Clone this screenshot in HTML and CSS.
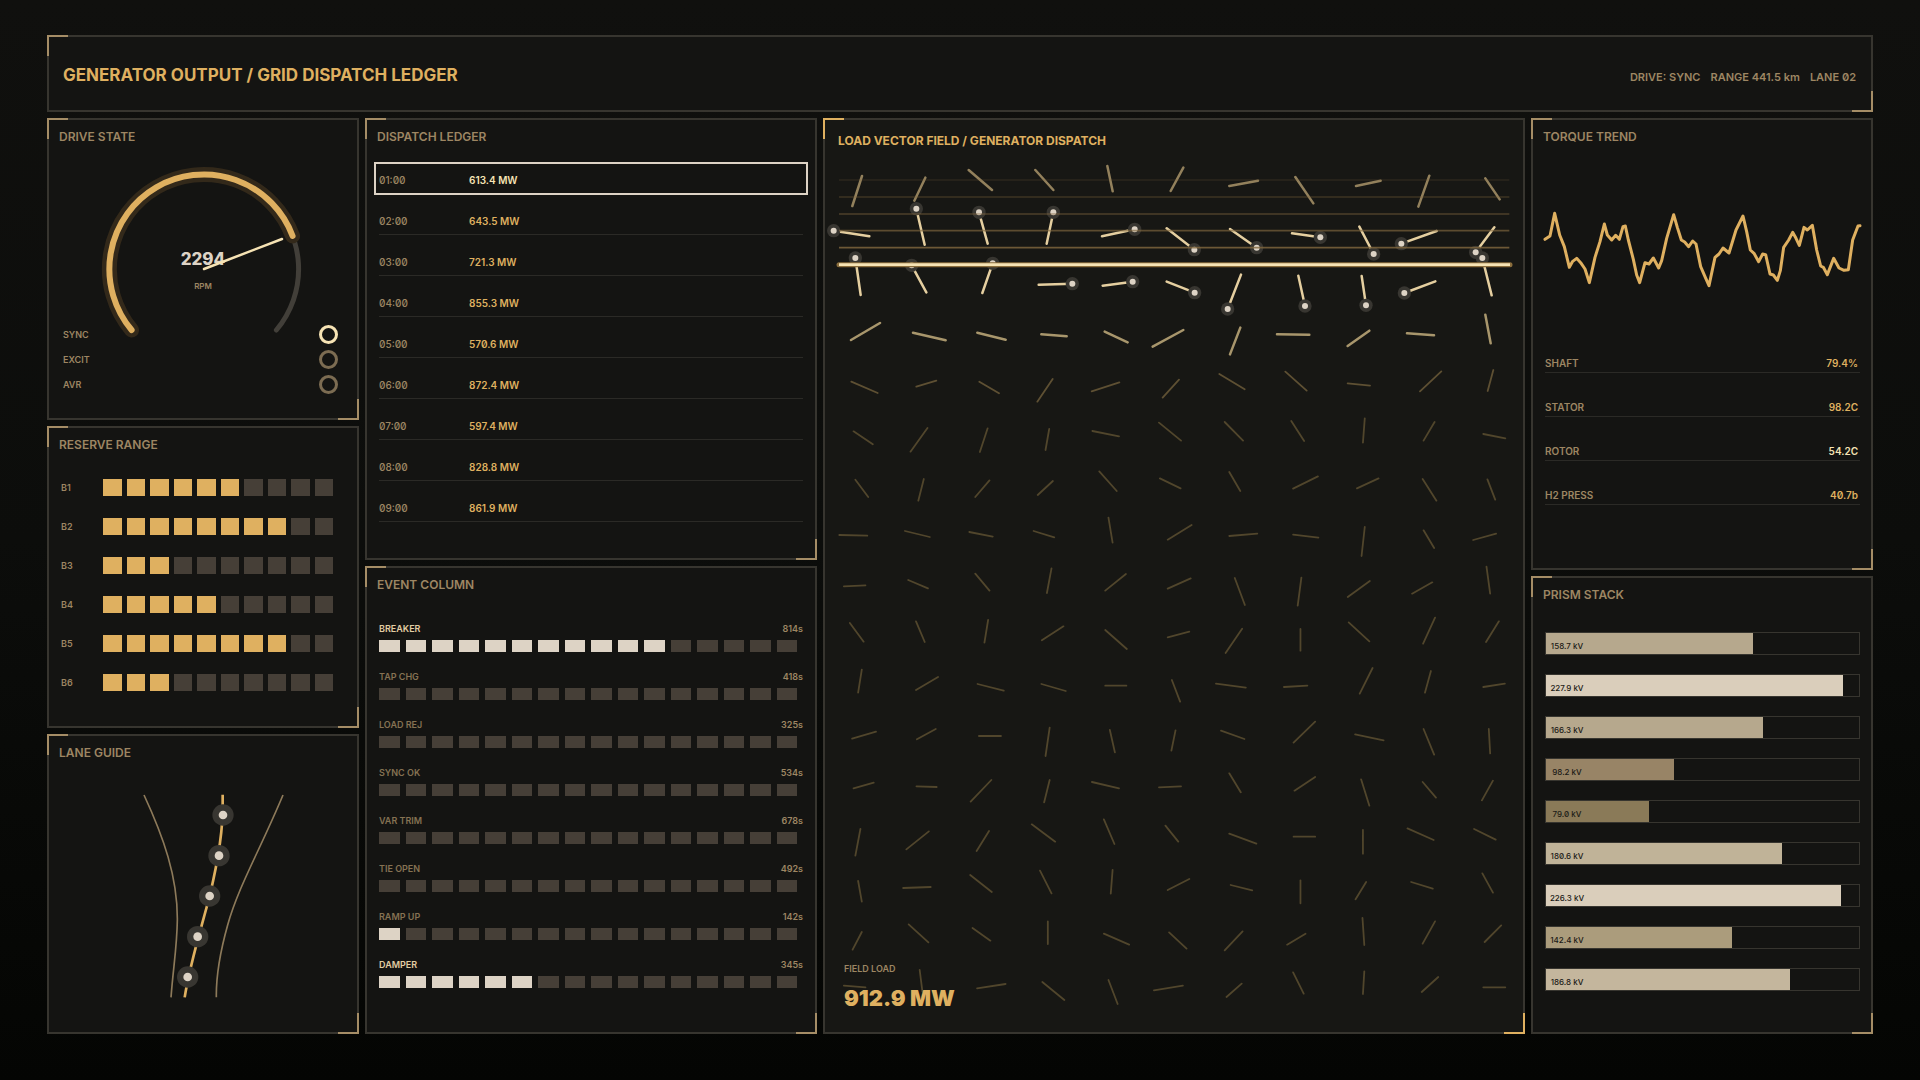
FILE: index.html
```html
<!DOCTYPE html>
<html lang="en">
<head>
    <meta charset="UTF-8">
    <meta name="viewport" content="width=device-width, initial-scale=1.0">
    <title>Generator Output / Grid Dispatch Ledger</title>
    <link rel="stylesheet" href="styles.css">
</head>
<body>
    <div class="screen">
        <header class="panel topbar">
            <h1>GENERATOR OUTPUT / GRID DISPATCH LEDGER</h1>
            <div class="topbar-info">
                <span>DRIVE: SYNC</span>
                <span>RANGE 441.5 km</span>
                <span>LANE 02</span>
            </div>
        </header>

        <main class="board">
            <div class="column column-left">
                <section class="panel">
                    <h2>DRIVE STATE</h2>
                    <svg class="gauge" viewBox="-155 -112 308 165">
                        <path class="gauge-track" d="M-72.4 61A94.6 94.6 0 1 1 72.4 61"/>
                        <path class="gauge-halo" d="M-72.4 61A94.6 94.6 0 1 1 88.6 -33"/>
                        <path class="gauge-value" d="M-72.4 61A94.6 94.6 0 1 1 88.6 -33"/>
                        <text class="gauge-number" x="-1" y="-4">2294</text>
                        <text class="gauge-unit" x="-1" y="20">RPM</text>
                        <path class="gauge-needle" d="M0 0L78 -30"/>
                    </svg>
                    <ul class="status-list">
                        <li>SYNC <span class="lamp lamp-on"></span></li>
                        <li>EXCIT <span class="lamp"></span></li>
                        <li>AVR <span class="lamp"></span></li>
                    </ul>
                </section>

                <section class="panel">
                    <h2>RESERVE RANGE</h2>
                    <ul class="reserve">
                        <li><span>B1</span><div class="cells" data-total="10" data-on="6"></div></li>
                        <li><span>B2</span><div class="cells" data-total="10" data-on="8"></div></li>
                        <li><span>B3</span><div class="cells" data-total="10" data-on="3"></div></li>
                        <li><span>B4</span><div class="cells" data-total="10" data-on="5"></div></li>
                        <li><span>B5</span><div class="cells" data-total="10" data-on="8"></div></li>
                        <li><span>B6</span><div class="cells" data-total="10" data-on="3"></div></li>
                    </ul>
                </section>

                <section class="panel">
                    <h2>LANE GUIDE</h2>
                    <svg class="lane" viewBox="57 159 924 777">
                        <path class="lane-edge" d="M342 225C400 350 443 470 442 600C441 680 430 740 423 832M759 225C690 390 625 500 593 615C572 690 558 760 559 832"/>
                        <path class="lane-center" d="M578 224V250C580 330 560 440 539 528C515 620 480 730 464 832"/>
                        <g class="lane-halo">
                            <circle cx="579" cy="285" r="32"/><circle cx="567" cy="407" r="32"/><circle cx="539" cy="528" r="32"/><circle cx="503" cy="650" r="32"/><circle cx="473" cy="771" r="32"/>
                        </g>
                        <g class="lane-dot">
                            <circle cx="579" cy="285" r="13"/><circle cx="567" cy="407" r="13"/><circle cx="539" cy="528" r="13"/><circle cx="503" cy="650" r="13"/><circle cx="473" cy="771" r="13"/>
                        </g>
                    </svg>
                </section>
            </div>

            <div class="column column-ledger">
                <section class="panel">
                    <h2>DISPATCH LEDGER</h2>
                    <table class="ledger">
                        <tr class="selected"><th scope="row">01:00</th><td>613.4 MW</td></tr>
                        <tr><th scope="row">02:00</th><td>643.5 MW</td></tr>
                        <tr><th scope="row">03:00</th><td>721.3 MW</td></tr>
                        <tr><th scope="row">04:00</th><td>855.3 MW</td></tr>
                        <tr><th scope="row">05:00</th><td>570.6 MW</td></tr>
                        <tr><th scope="row">06:00</th><td>872.4 MW</td></tr>
                        <tr><th scope="row">07:00</th><td>597.4 MW</td></tr>
                        <tr><th scope="row">08:00</th><td>828.8 MW</td></tr>
                        <tr><th scope="row">09:00</th><td>861.9 MW</td></tr>
                    </table>
                </section>

                <section class="panel">
                    <h2>EVENT COLUMN</h2>
                    <ul class="events">
                        <li class="active"><p><b>BREAKER</b><span>814s</span></p><div class="cells" data-total="16" data-on="11"></div></li>
                        <li><p><b>TAP CHG</b><span>418s</span></p><div class="cells" data-total="16" data-on="0"></div></li>
                        <li><p><b>LOAD REJ</b><span>325s</span></p><div class="cells" data-total="16" data-on="0"></div></li>
                        <li><p><b>SYNC OK</b><span>534s</span></p><div class="cells" data-total="16" data-on="0"></div></li>
                        <li><p><b>VAR TRIM</b><span>678s</span></p><div class="cells" data-total="16" data-on="0"></div></li>
                        <li><p><b>TIE OPEN</b><span>492s</span></p><div class="cells" data-total="16" data-on="0"></div></li>
                        <li><p><b>RAMP UP</b><span>142s</span></p><div class="cells" data-total="16" data-on="1"></div></li>
                        <li class="active"><p><b>DAMPER</b><span>345s</span></p><div class="cells" data-total="16" data-on="6"></div></li>
                    </ul>
                </section>
            </div>

            <section class="panel panel-field">
                <h2>LOAD VECTOR FIELD / GENERATOR DISPATCH</h2>
                <svg class="field" viewBox="15 120 2094 2646">
                    <!-- rows near the sweep line, left half -->
                    <path class="vec vec-top" d="M126 198L97 288M316 203L283 272M446 180L516 240M646 180L700 240M862 168L878 244"/>
                    <path class="vec vec-hot" d="M41 362L148 379M289 296L314 404M477 307L503 401M700 307L680 401M944 358L846 379M106 444L122 555M275 466L319 547M518 460L487 549M656 524L757 521M848 527L938 515"/>
                    <path class="vec vec-warm" d="M93 690L180 639M279 668L377 691M472 668L557 689M664 673L740 679M854 665L923 697"/>
                    <path class="vec vec-dim" d="M94 815L173 849M289 830L349 812M478 815L537 850M698 807L652 875M815 844L898 817"/>
                    <!-- right half -->
                    <g transform="translate(1050 0)">
                        <path class="vec vec-top" d="M2 243L40 173M178 228L264 212M376 201L430 280M558 228L632 212M778 197L745 290M946 205L989 268"/>
                        <path class="vec vec-hot" d="M-10 355L73 419M180 357L260 413M366 370L451 382M568 350L611 432M694 401L800 363M917 427L973 352M-10 515L74 548M213 494L173 597M385 497L405 588M575 498L588 586M796 514L703 549M937 444L965 556"/>
                        <path class="vec vec-warm" d="M-52 710L40 660M211 653L180 733M321 673L418 674M533 708L598 662M711 670L792 676M946 614L962 700"/>
                        <path class="vec vec-dim" d="M-22 863L27 809M148 792L224 838M346 785L410 842M533 820L600 827M814 784L750 844M970 780L953 843"/>
                    </g>
                    <!-- quiet rows -->
                    <g transform="translate(0 870) scale(1.378 1)">
                        <path class="vec vec-quiet" d="M73 94L115 133M234 84L197 155M365 85L348 156M499 87L491 150M593 93L651 109M738 68L786 122M881 66L921 122M1026 63L1054 123M1186 55L1182 128M1338 66L1314 122M1444 102L1492 115"/>
                        <path class="vec vec-quiet" d="M77 239L105 291M226 237L214 302M369 241L338 291M507 243L474 285M608 214L646 273M740 235L785 265M891 216L915 273M1084 229L1030 266M1216 235L1169 265M1312 237L1342 302M1453 238L1470 299"/>
                        <path class="vec vec-quiet" d="M42 405L103 407M185 393L239 411M325 396L376 410M465 393L510 412M628 353L637 428M809 375L757 419M891 408L952 401M1030 404L1085 413M1186 381L1179 468M1314 391L1337 444M1422 420L1472 401"/>
                        <path class="vec vec-quiet" d="M52 559L99 556M192 540L235 565M338 521L369 572M504 505L494 579M666 522L621 572M807 535L757 566M903 534L925 615M1048 533L1040 617M1197 543L1149 591M1333 547L1289 581M1451 500L1459 581"/>
                        <path class="vec vec-quiet" d="M65 669L95 725M209 664L228 726M366 660L358 728M530 679L483 721M621 690L668 747M804 695L757 712M919 686L883 759M1046 687V752M1151 667L1196 724M1339 653L1313 731M1478 664L1450 726"/>
                        <path class="vec vec-quiet" d="M91 809L83 878M257 831L209 870M343 852L400 872M482 852L535 873M621 857L667 857M766 840L784 905M862 851L927 863M1010 861L1061 857M1203 804L1175 881M1330 813L1317 878M1444 861L1491 851"/>
                    </g>
                    <g transform="translate(0 1800) scale(1.378 1)">
                        <path class="vec vec-quiet" d="M70 86L122 65M211 88L252 57M346 78H394M500 53L491 138M631 60L642 127M774 61L765 122M873 62L924 87M1078 35L1031 98M1165 73L1227 91M1314 57L1337 134M1456 57L1459 130"/>
                        <path class="vec vec-quiet" d="M73 235L117 218M210 229L254 231M373 210L328 275M500 210L488 277M592 216L651 235M738 232L786 229M891 190L916 247M1078 201L1033 242M1178 208L1196 287M1312 216L1341 263M1465 212L1441 271"/>
                        <path class="vec vec-quiet" d="M88 357L77 437M237 364L188 418M368 363L341 423M461 343L512 395M618 328L641 402M752 347L780 395M891 371L950 401M1031 380H1078M1182 360V431M1279 355L1336 390M1424 357L1471 389"/>
                        <path class="vec vec-quiet" d="M83 513L91 575M181 534L241 531M327 495L374 546M479 482L504 550M637 480L633 551M804 507L757 540M894 525L941 541M1046 511V580M1189 516L1166 568M1287 516L1334 536M1442 490L1465 548"/>
                        <path class="vec vec-quiet" d="M91 666L71 719M193 643L236 697M332 654L371 692M496 634V702M618 671L673 704M760 667L798 716M920 664L881 721M1057 671L1017 704M1181 624L1185 705M1339 634L1312 701M1483 646L1447 696"/>
                        <path class="vec vec-quiet" d="M52 827L99 832M217 780L223 845M342 835L404 822M484 816L532 870M628 810L648 882M727 841L790 827M918 821L885 861M1030 787L1053 851M1185 784L1182 852M1346 801L1310 846M1444 832H1492"/>
                    </g>
                    <g class="node-halo">
                        <circle cx="41" cy="362" r="20"/><circle cx="289" cy="296" r="20"/><circle cx="477" cy="307" r="20"/><circle cx="700" cy="307" r="20"/><circle cx="944" cy="358" r="20"/>
                        <circle cx="1123" cy="419" r="20"/><circle cx="1310" cy="413" r="20"/><circle cx="1501" cy="382" r="20"/><circle cx="1661" cy="432" r="20"/><circle cx="1744" cy="401" r="20"/><circle cx="1967" cy="427" r="20"/>
                        <circle cx="106" cy="444" r="20"/><circle cx="275" cy="466" r="20"/><circle cx="518" cy="460" r="20"/><circle cx="757" cy="521" r="20"/><circle cx="938" cy="515" r="20"/>
                        <circle cx="1124" cy="548" r="20"/><circle cx="1223" cy="597" r="20"/><circle cx="1455" cy="588" r="20"/><circle cx="1638" cy="586" r="20"/><circle cx="1753" cy="549" r="20"/><circle cx="1987" cy="444" r="20"/>
                    </g>
                    <g class="node-dot">
                        <circle cx="41" cy="362" r="9"/><circle cx="289" cy="296" r="9"/><circle cx="477" cy="307" r="9"/><circle cx="700" cy="307" r="9"/><circle cx="944" cy="358" r="9"/>
                        <circle cx="1123" cy="419" r="9"/><circle cx="1310" cy="413" r="9"/><circle cx="1501" cy="382" r="9"/><circle cx="1661" cy="432" r="9"/><circle cx="1744" cy="401" r="9"/><circle cx="1967" cy="427" r="9"/>
                        <circle cx="106" cy="444" r="9"/><circle cx="275" cy="466" r="9"/><circle cx="518" cy="460" r="9"/><circle cx="757" cy="521" r="9"/><circle cx="938" cy="515" r="9"/>
                        <circle cx="1124" cy="548" r="9"/><circle cx="1223" cy="597" r="9"/><circle cx="1455" cy="588" r="9"/><circle cx="1638" cy="586" r="9"/><circle cx="1753" cy="549" r="9"/><circle cx="1987" cy="444" r="9"/>
                    </g>
                    <!-- sweep line and its trail -->
                    <g class="trail">
                        <path opacity=".2" d="M57 210H2068"/>
                        <path opacity=".35" d="M57 261H2068"/>
                        <path opacity=".5" d="M57 312H2068"/>
                        <path opacity=".65" d="M57 362H2068"/>
                        <path opacity=".8" d="M57 413H2068"/>
                    </g>
                    <path class="sweep-glow" d="M57 464H2070"/>
                    <path class="sweep" d="M57 464H2070"/>
                </svg>
                <div class="field-readout">
                    <span>FIELD LOAD</span>
                    <strong>912.9 MW</strong>
                </div>
            </section>

            <div class="column column-right">
                <section class="panel">
                    <h2>TORQUE TREND</h2>
                    <svg class="trend" viewBox="39 411 1014 516">
                        <polyline points="75,658 90,648 104,580 119,645 133,680 148,742 158,724 170,715 182,728 195,747 208,788 225,712 240,665 253,612 262,645 275,660 287,646 298,658 309,620 316,618 325,660 340,718 350,765 359,788 375,728 387,732 400,714 416,744 425,722 440,655 461,584 472,622 484,660 494,666 506,680 518,663 528,672 542,740 555,770 567,797 585,712 597,702 609,684 627,699 648,630 669,588 680,635 691,690 702,700 716,725 728,702 737,704 750,762 760,765 772,781 781,752 791,682 806,660 818,637 828,655 838,676 852,622 862,630 877,616 890,690 902,738 910,742 922,764 941,715 957,744 972,751 985,749 998,660 1014,618 1020,617"/>
                    </svg>
                    <dl class="metrics">
                        <div><dt>SHAFT</dt><dd>79.4%</dd></div>
                        <div><dt>STATOR</dt><dd>98.2C</dd></div>
                        <div><dt>ROTOR</dt><dd class="hot">54.2C</dd></div>
                        <div><dt>H2 PRESS</dt><dd>40.7b</dd></div>
                    </dl>
                </section>

                <section class="panel">
                    <h2>PRISM STACK</h2>
                    <ul class="prism">
                        <li><div class="fill tone-4" style="width: 66.1%"><span>158.7 kV</span></div></li>
                        <li><div class="fill tone-7" style="width: 95%"><span>227.9 kV</span></div></li>
                        <li><div class="fill tone-4" style="width: 69.3%"><span>166.3 kV</span></div></li>
                        <li><div class="fill tone-2" style="width: 40.9%"><span>98.2 kV</span></div></li>
                        <li><div class="fill tone-1" style="width: 32.9%"><span>79.0 kV</span></div></li>
                        <li><div class="fill tone-5" style="width: 75.3%"><span>180.6 kV</span></div></li>
                        <li><div class="fill tone-7" style="width: 94.3%"><span>226.3 kV</span></div></li>
                        <li><div class="fill tone-3" style="width: 59.3%"><span>142.4 kV</span></div></li>
                        <li><div class="fill tone-6" style="width: 77.8%"><span>186.8 kV</span></div></li>
                    </ul>
                </section>
            </div>
        </main>
    </div>
    <script src="script.js"></script>
</body>
</html>
```

FILE: styles.css
```css
* {
    box-sizing: border-box;
}
:root {
    --amber: #dfb060;
    --tan: #9d8663;
    --cream: #ddd3c5;
    --glow: #f6e3b4;
    --line: #37352f;
    --cell: #463f37;
}
body {
    margin: 0;
    background: linear-gradient(#10100e, #0c0d0b 50%, #040503);
    color: var(--tan);
    font-family: Inter, Roboto, "Liberation Sans", sans-serif;
    font-feature-settings: "zero";
    font-size: 10px;
    font-weight: 600;
}
h1, h2, ul, p, dl, dd {
    margin: 0;
    padding: 0;
}
ul {
    list-style: none;
}
svg {
    display: block;
    width: 100%;
    overflow: visible;
    fill: none;
}
.screen {
    display: flex;
    flex-direction: column;
    gap: 6px;
    min-height: 100vh;
    padding: 35px 47px 46px;
}

/* panels */
.panel {
    position: relative;
    background: #141412;
    border: 2px solid var(--line);
}
.panel::before,
.panel::after {
    content: "";
    position: absolute;
    width: 19px;
    height: 19px;
    border: 0 solid #a58d66;
}
.panel::before {
    top: -2px;
    left: -2px;
    border-width: 2px 0 0 2px;
}
.panel::after {
    right: -2px;
    bottom: -2px;
    border-width: 0 2px 2px 0;
}
.panel h2 {
    padding: 8px 10px 12px;
    font-size: 12px;
    line-height: 17px;
    font-weight: 600;
}
.topbar {
    display: flex;
    justify-content: space-between;
    align-items: baseline;
    padding: 28px 15px 25px 14px;
}
.topbar h1 {
    color: var(--amber);
    font-size: 17px;
    line-height: 20px;
    font-weight: 700;
}
.topbar-info {
    display: flex;
    gap: 10px;
    font-size: 11px;
    font-weight: 600;
}

.board {
    flex: 1;
    display: grid;
    grid-template-columns: 312fr 452fr 702fr 342fr;
    gap: 6px;
}
.column {
    display: grid;
    gap: 6px;
}
.column-left {
    grid-template-rows: 302fr 302fr 300fr;
}
.column-ledger {
    grid-template-rows: 442fr 468fr;
}
.column-right {
    grid-template-rows: 452fr 458fr;
}

/* drive state */
.gauge-track {
    stroke: #423f39;
    stroke-width: 5;
    stroke-linecap: round;
}
.gauge-halo {
    stroke: #33291a;
    stroke-width: 15;
    stroke-linecap: round;
}
.gauge-value {
    stroke: var(--amber);
    stroke-width: 6;
    stroke-linecap: round;
}
.gauge-needle {
    stroke: var(--glow);
    stroke-width: 2.5;
    stroke-linecap: round;
}
.gauge text {
    text-anchor: middle;
}
.gauge-number {
    fill: var(--cream);
    font-size: 17px;
    font-weight: 800;
}
.gauge-unit {
    fill: var(--tan);
    font-size: 8px;
    font-weight: 600;
}
.status-list {
    padding: 0 19px 0 14px;
    font-size: 9px;
}
.status-list li {
    display: flex;
    align-items: center;
    justify-content: space-between;
    height: 25px;
}
.lamp {
    width: 19px;
    height: 19px;
    border: 3px solid #7c6c52;
    border-radius: 50%;
}
.lamp-on {
    border-color: var(--glow);
}

/* segmented bars */
.cells {
    flex: 1;
    display: flex;
    gap: 5px;
}
.cells i {
    flex: 1;
    height: 17px;
    background: var(--cell);
}
.cells .on {
    background: var(--amber);
}
.reserve {
    display: grid;
    gap: 22px;
    padding: 14px 24px 0 12px;
    font-size: 9px;
}
.reserve li {
    display: flex;
    align-items: center;
}
.reserve span {
    width: 42px;
}

/* lane guide */
.lane-edge {
    stroke: #8d7a5a;
    stroke-width: 5;
}
.lane-center {
    stroke: var(--amber);
    stroke-width: 8;
}
.lane-halo {
    fill: #383631;
}
.lane-dot {
    fill: var(--cream);
}

/* dispatch ledger */
.ledger {
    width: calc(100% - 24px);
    margin: -4px 12px 0;
    border-collapse: separate;
    border-spacing: 0;
}
.ledger tr {
    position: relative;
    height: 41px;
}
.ledger th,
.ledger td {
    padding: 0 0 6px;
    border-bottom: 1px solid #2b2a26;
    line-height: 14px;
    vertical-align: bottom;
    text-align: left;
}
.ledger th {
    width: 90px;
    font-weight: 500;
}
.ledger td {
    color: var(--amber);
}
.ledger .selected td {
    color: var(--glow);
}
.ledger .selected::after {
    content: "";
    position: absolute;
    inset: 9px -5px -1px;
    border: 2px solid var(--cream);
}

/* event column */
.events {
    display: grid;
    gap: 19px;
    padding: 18px 12px 0;
    font-size: 9px;
}
.events p {
    display: flex;
    justify-content: space-between;
    margin-bottom: 5px;
    line-height: 12px;
}
.events b {
    color: #857253;
    font-weight: 600;
}
.events .active b {
    color: #e2cda3;
}
.events .cells {
    gap: 6px;
    padding-right: 6px;
}
.events .cells i {
    height: 12px;
}
.events .cells .on {
    background: var(--cream);
}

/* vector field */
.panel-field {
    background: #171714;
}
.panel-field::before,
.panel-field::after {
    border-color: var(--amber);
}
.panel-field h2 {
    padding: 12px 13px 1px;
    color: var(--amber);
    font-weight: 700;
}
.vec {
    vector-effect: non-scaling-stroke;
    stroke-linecap: round;
}
.vec-top {
    stroke: #93815c;
    stroke-width: 2.5px;
}
.vec-hot {
    stroke: #e5cfa0;
    stroke-width: 2.5px;
}
.vec-warm {
    stroke: #a8966c;
    stroke-width: 2.5px;
}
.vec-dim {
    stroke: #5e5033;
    stroke-width: 1.8px;
}
.vec-quiet {
    stroke: #51462c;
    stroke-width: 1.8px;
}
.node-halo {
    fill: #383631;
}
.node-dot {
    fill: var(--cream);
}
.trail {
    stroke: #83693f;
    stroke-width: 5;
}
.sweep-glow {
    stroke: #8a6d3c;
    stroke-width: 15;
    stroke-linecap: round;
}
.sweep {
    stroke: var(--glow);
    stroke-width: 8;
}
.field-readout {
    position: absolute;
    left: 19px;
    bottom: 20px;
    display: grid;
    gap: 9px;
}
.field-readout span {
    font-size: 9px;
    line-height: 12px;
    font-weight: 600;
}
.field-readout strong {
    color: var(--amber);
    font-size: 22px;
    line-height: 28px;
    font-weight: 900;
}

/* torque trend */
.trend {
    stroke: var(--amber);
    stroke-width: 9;
    stroke-linejoin: round;
    stroke-linecap: round;
}
.metrics {
    padding: 0 11px 0 12px;
}
.metrics div {
    display: flex;
    justify-content: space-between;
    align-items: flex-end;
    height: 44px;
    padding: 0 2px 2px 0;
    border-bottom: 1px solid #2b2a26;
    line-height: 14px;
}
.metrics dd {
    color: var(--amber);
}
.metrics .hot {
    color: var(--glow);
}

/* prism stack */
.prism {
    display: grid;
    gap: 19px;
    padding: 17px 11px 0 12px;
}
.prism li {
    height: 23px;
    border: 1px solid var(--line);
}
.fill {
    height: 100%;
    padding-top: 7px;
    color: #1b1a16;
    font-size: 8px;
    line-height: 12px;
    font-weight: 500;
}
.fill span {
    display: block;
    width: 42px;
    text-align: center;
}
.tone-1 { background: #8a7a58; }
.tone-2 { background: #988466; }
.tone-3 { background: #ab9c7c; }
.tone-4 { background: #b6a88d; }
.tone-5 { background: #c0b398; }
.tone-6 { background: #c4b69d; }
.tone-7 { background: #dacebb; }
```

FILE: script.js
```js
// fill each segmented bar from its data attributes
document.querySelectorAll('.cells').forEach(function (bar) {
    const on = Number(bar.dataset.on);
    for (let i = 0; i < Number(bar.dataset.total); i++) {
        const cell = document.createElement('i');
        if (i < on) cell.className = 'on';
        bar.appendChild(cell);
    }
});
```
